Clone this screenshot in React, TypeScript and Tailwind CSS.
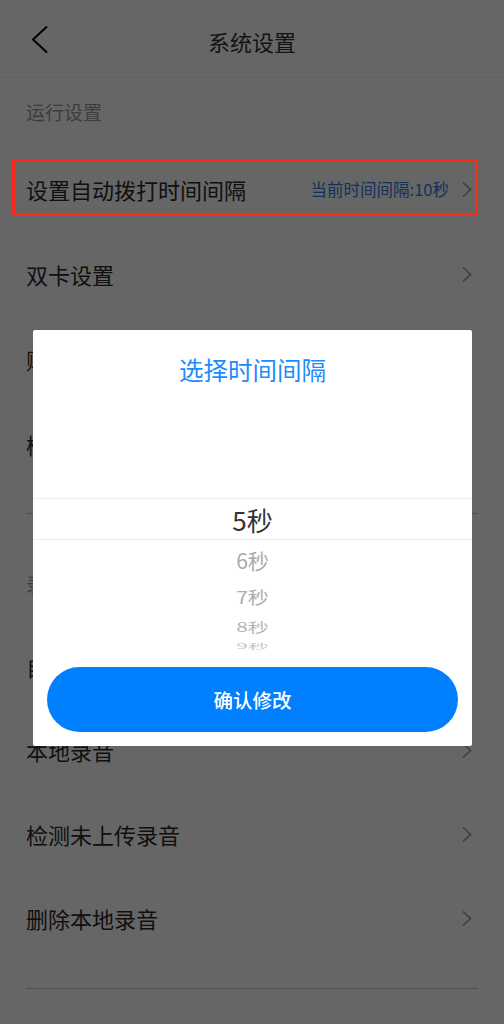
import React from "react";

const font = { fontFamily: '"Noto Sans CJK SC", "Noto Sans", sans-serif' };

function Chevron() {
  return (
    <svg width="12" height="17" viewBox="0 0 12 17" className="shrink-0">
      <polyline points="2,1.5 9.5,8.5 2,15.5" fill="none" stroke="#9a9a9a" strokeWidth="1.6" />
    </svg>
  );
}

function Row({ label, right }: { label: string; right?: string }) {
  return (
    <div className="h-[85px] flex items-center pl-[26px] pr-[31px]">
      <span className="flex-1 text-[22px] text-[#2a2a2a]">{label}</span>
      {right && <span className="text-[16.5px] text-[#2f7ae0] mr-[12px]">{right}</span>}
      <Chevron />
    </div>
  );
}

function Row2({ label }: { label: string }) {
  return (
    <div className="h-[84px] flex items-center pl-[26px] pr-[31px]">
      <span className="flex-1 text-[22px] text-[#2a2a2a]">{label}</span>
      <Chevron />
    </div>
  );
}

export default function App() {
  return (
    <div className="relative w-[504px] h-[1024px] bg-white overflow-hidden" style={font}>
      {/* header */}
      <div className="h-[78px] flex items-center justify-center relative border-b border-[#f0f0f0] pt-[6px]">
        <svg width="20" height="30" viewBox="0 0 20 30" className="absolute left-[30px] top-[25px]">
          <polyline points="17,1.5 3,14.5 17,27.5" fill="none" stroke="#000" strokeWidth="2" />
        </svg>
        <span className="text-[22px] text-[#333]">系统设置</span>
      </div>
      <div className="h-[69px] flex items-center px-[26px] text-[19px] text-[#999]">运行设置</div>
      <Row label="设置自动拨打时间间隔" right="当前时间间隔:10秒" />
      <Row label="双卡设置" />
      <Row label="账号设置" />
      <Row label="检查更新" />
      <div className="mt-[26px] mx-[26px] border-t border-[#c8c8c8]" />
      <div className="pt-[58px] pb-[28px] px-[26px] text-[19px] leading-[24px] text-[#999]">录音设置</div>
      <Row2 label="自动上传录音" />
      <Row2 label="本地录音" />
      <Row2 label="检测未上传录音" />
      <Row2 label="删除本地录音" />
      <div className="mt-[28px] mx-[26px] border-t border-[#c8c8c8]" />

      {/* overlay */}
      <div className="absolute inset-0 bg-black/60" />

      {/* annotation box */}
      <div className="absolute left-[12px] top-[159px] w-[466px] h-[57px] border-[3px] border-[#ff2a1a] rounded-[3px]" />

      {/* dialog */}
      <div className="absolute left-[33px] top-[330px] w-[439px] bg-white rounded-[2px] flex flex-col">
        <div className="h-[80px] flex items-center justify-center text-[24.5px] text-[#1a8cff]">选择时间间隔</div>
        <div className="h-[88px]" />
        <div className="h-[42px] border-y border-[#eeeeee] flex items-center justify-center text-[26px] text-[#333]">5秒</div>
        <div className="h-[42px] flex items-center justify-center text-[21px] text-[#aaa]">6秒</div>
        <div className="h-[30px] flex items-center justify-center text-[21px] text-[#aeaeae]">
          <span className="inline-block scale-y-[0.82]">7秒</span>
        </div>
        <div className="h-[30px] flex items-center justify-center text-[21px] text-[#b4b4b4] overflow-hidden">
          <span className="inline-block scale-y-[0.6]">8秒</span>
        </div>
        <div className="h-[8px] flex items-start justify-center text-[21px] text-[#c4c4c4] overflow-hidden">
          <span className="inline-block scale-y-[0.35] -mt-[12px]">9秒</span>
        </div>
        <div className="h-[17px]" />
        <div className="mx-[14px] h-[65px] rounded-full bg-[#0080ff] flex items-center justify-center text-white text-[19.5px] font-medium">
          确认修改
        </div>
        <div className="h-[14px]" />
      </div>
    </div>
  );
}
